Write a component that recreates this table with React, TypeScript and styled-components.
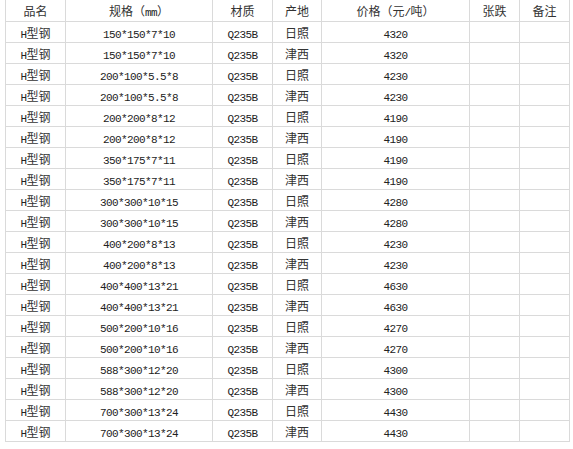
import styled, { createGlobalStyle } from "styled-components";

interface Row {
  spec: string;
  grade: string;
  origin: string;
  price: string;
}

const rows: Row[] = [
  { spec: "150*150*7*10", grade: "Q235B", origin: "日照", price: "4320" },
  { spec: "150*150*7*10", grade: "Q235B", origin: "津西", price: "4320" },
  { spec: "200*100*5.5*8", grade: "Q235B", origin: "日照", price: "4230" },
  { spec: "200*100*5.5*8", grade: "Q235B", origin: "津西", price: "4230" },
  { spec: "200*200*8*12", grade: "Q235B", origin: "日照", price: "4190" },
  { spec: "200*200*8*12", grade: "Q235B", origin: "津西", price: "4190" },
  { spec: "350*175*7*11", grade: "Q235B", origin: "日照", price: "4190" },
  { spec: "350*175*7*11", grade: "Q235B", origin: "津西", price: "4190" },
  { spec: "300*300*10*15", grade: "Q235B", origin: "日照", price: "4280" },
  { spec: "300*300*10*15", grade: "Q235B", origin: "津西", price: "4280" },
  { spec: "400*200*8*13", grade: "Q235B", origin: "日照", price: "4230" },
  { spec: "400*200*8*13", grade: "Q235B", origin: "津西", price: "4230" },
  { spec: "400*400*13*21", grade: "Q235B", origin: "日照", price: "4630" },
  { spec: "400*400*13*21", grade: "Q235B", origin: "津西", price: "4630" },
  { spec: "500*200*10*16", grade: "Q235B", origin: "日照", price: "4270" },
  { spec: "500*200*10*16", grade: "Q235B", origin: "津西", price: "4270" },
  { spec: "588*300*12*20", grade: "Q235B", origin: "日照", price: "4300" },
  { spec: "588*300*12*20", grade: "Q235B", origin: "津西", price: "4300" },
  { spec: "700*300*13*24", grade: "Q235B", origin: "日照", price: "4430" },
  { spec: "700*300*13*24", grade: "Q235B", origin: "津西", price: "4430" },
];

const widths = [60, 147, 60, 49, 148, 50, 50];

export default function App() {
  return (
    <>
      <GlobalStyle />
      <Page>
        <PriceTable>
          <colgroup>
            {widths.map((w, i) => (
              <col key={i} style={{ width: w }} />
            ))}
          </colgroup>
          <thead>
            <Line>
              <HeadCell>品名</HeadCell>
              <HeadCell>
                规格（<Latin>mm</Latin>）
              </HeadCell>
              <HeadCell>材质</HeadCell>
              <HeadCell>产地</HeadCell>
              <HeadCell>
                价格（元<Latin>/</Latin>吨）
              </HeadCell>
              <HeadCell>张跌</HeadCell>
              <HeadCell>备注</HeadCell>
            </Line>
          </thead>
          <tbody>
            {rows.map((r, i) => (
              <Line key={i}>
                <Cell>
                  <Latin>H</Latin>型钢
                </Cell>
                <Cell>
                  <Latin>{r.spec}</Latin>
                </Cell>
                <Cell>
                  <Latin>{r.grade}</Latin>
                </Cell>
                <Cell>{r.origin}</Cell>
                <Cell>
                  <Latin>{r.price}</Latin>
                </Cell>
                <Cell />
                <Cell />
              </Line>
            ))}
          </tbody>
        </PriceTable>
      </Page>
    </>
  );
}

const GlobalStyle = createGlobalStyle`
  body {
    margin: 0;
    background: #fff;
  }
`;

const Page = styled.div`
  padding: 0 0 0 5px;
`;

const PriceTable = styled.table`
  border-collapse: collapse;
  table-layout: fixed;
  width: 565px;
  font-family: "Noto Sans CJK SC", sans-serif;
  font-size: 12px;
  color: #333;
`;

const Line = styled.tr`
  height: 21px;
`;

const Cell = styled.td`
  height: 21px;
  box-sizing: border-box;
  padding: 2px 0 0;
  border: 1px solid #dadada;
  text-align: center;
  vertical-align: middle;
  line-height: 16px;
  white-space: nowrap;
  overflow: hidden;
`;

const HeadCell = styled(Cell).attrs({ as: "th" })`
  font-weight: normal;
  border-top: none;
`;

const Latin = styled.span`
  font-family: "Liberation Mono", monospace;
  font-size: 11px;
  letter-spacing: -0.6px;
  line-height: 10px;
  color: #222;
`;
